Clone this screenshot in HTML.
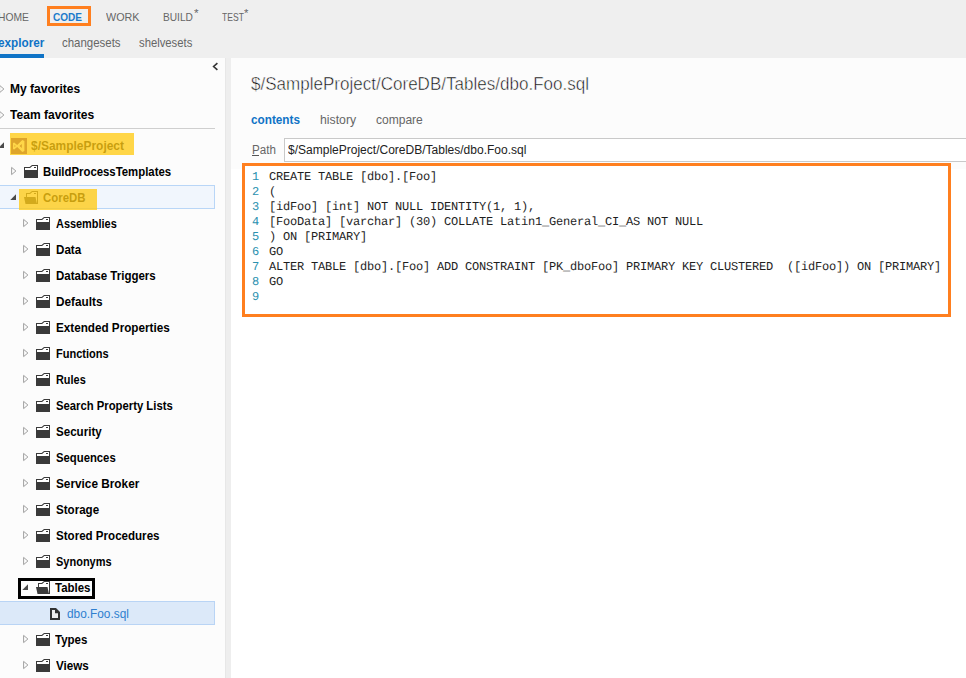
<!DOCTYPE html>
<html><head><meta charset="utf-8"><title>Code explorer</title>
<style>
html,body{margin:0;padding:0;overflow:hidden}
html{width:966px;height:678px}
body{width:966px;height:678px;overflow:hidden;background:#fff;position:relative;font-family:"Liberation Sans",sans-serif}
.b{position:absolute;box-sizing:content-box}
.i{position:absolute;display:block}
.t{position:absolute;white-space:pre;transform-origin:0 0}
.c{position:absolute;white-space:pre;font:12px/12px "Liberation Mono",monospace;letter-spacing:-0.2px;color:#1e1e1e;text-rendering:geometricPrecision}
.u{text-decoration:underline}
</style></head><body>
<div class="b" style="left:0;top:0;width:966px;height:58px;background:#efefef"></div>
<div class="b" style="left:47px;top:6px;width:38px;height:14px;border:3px solid #ff7f1f"></div>
<div class="b" style="left:0;top:54px;width:44px;height:4px;background:#0f73c6"></div>
<div class="b" style="left:0;top:58px;width:225px;height:620px;background:#fcfcfc"></div>
<div class="b" style="left:225px;top:58px;width:6px;height:620px;background:#eeeeee"></div>
<div class="b" style="left:231px;top:58px;width:735px;height:111px;background:#fcfcfc"></div>
<div class="b" style="left:225px;top:58px;width:1px;height:620px;background:#e7e7e7"></div>
<div class="b" style="left:252px;top:155px;width:7px;height:1px;background:#555"></div>
<svg class="i" style="left:211px;top:61px" width="9" height="11" viewBox="0 0 9 11"><path fill="none" stroke="#333" stroke-width="1.6" d="M6.4,2.1L2.6,5.5L6.4,8.9"/></svg>
<div class="b" style="left:0;top:128px;width:215px;height:1px;background:#cfcfcf"></div>
<div class="b" style="left:-1px;top:185px;width:214px;height:22px;background:#f1f6fd;border:1px solid #b9d6f7"></div>
<div class="b" style="left:-1px;top:601px;width:214px;height:22px;background:#dce9f9;border:1px solid #b9d4f5"></div>
<div class="b" style="left:284px;top:138px;width:681px;height:22px;background:#fff;border:1px solid #c9c9c9;border-right:0"></div>
<div class="b" style="left:242px;top:163px;width:703px;height:148px;background:#fff;border:3px solid #ff7f1f"></div>
<svg class="i" style="left:-0.8px;top:83.9px" width="7" height="10" viewBox="0 0 7 10"><path fill="none" stroke="#a0a0a0" stroke-width="1" d="M0.6,1.4 L4.9,5 L0.6,8.6 Z"/></svg>
<svg class="i" style="left:-0.8px;top:109.9px" width="7" height="10" viewBox="0 0 7 10"><path fill="none" stroke="#a0a0a0" stroke-width="1" d="M0.6,1.4 L4.9,5 L0.6,8.6 Z"/></svg>
<svg class="i" style="left:-2px;top:142px" width="6" height="6" viewBox="0 0 6 6"><path fill="#4a4a4a" d="M6,0.3V6H0.3Z"/></svg>
<svg class="i" style="left:11px;top:138px" width="16" height="16" viewBox="0 0 16 16"><rect width="16" height="16" fill="#68217a"/><path fill="#fff" fill-rule="evenodd" d="M11.3,2.1L13.4,3V13L11.3,13.9L6.2,8.9L3.2,11.5L2,10.9V5.1L3.2,4.5L6.2,7.1ZM10.8,6.1L8.5,8L10.8,9.9ZM3.5,6.9V9.1L4.8,8Z"/></svg>
<svg class="i" style="left:11px;top:166.4px" width="7" height="10" viewBox="0 0 7 10"><path fill="none" stroke="#a0a0a0" stroke-width="1" d="M0.6,1.4 L4.9,5 L0.6,8.6 Z"/></svg>
<svg class="i" style="left:24px;top:165px" width="14" height="13" viewBox="0 0 14 13" shape-rendering="crispEdges"><path fill="#3a3a3a" d="M0,2H5.6L8,0H14V13H0Z" shape-rendering="auto"/><path fill="#fff" d="M1,3H6.1L8.4,1H13V5H1Z" shape-rendering="auto"/><rect x="10" y="2" width="2" height="1" fill="#3a3a3a"/></svg>
<svg class="i" style="left:10px;top:194px" width="6" height="6" viewBox="0 0 6 6"><path fill="#4a4a4a" d="M6,0.3V6H0.3Z"/></svg>
<svg class="i" style="left:24px;top:191px" width="14" height="13" viewBox="0 0 14 13"><path fill="#3a3a3a" d="M2,2H5.6L8,0H14V13H2Z"/><path fill="#fff" d="M3,3H6.1L8.4,1H13V12H3Z"/><rect x="10" y="2" width="2" height="1" fill="#3a3a3a"/><path fill="#3a3a3a" d="M0,6H11.5L13,13H1.5Z"/></svg>
<svg class="i" style="left:23px;top:218.4px" width="7" height="10" viewBox="0 0 7 10"><path fill="none" stroke="#a0a0a0" stroke-width="1" d="M0.6,1.4 L4.9,5 L0.6,8.6 Z"/></svg>
<svg class="i" style="left:36px;top:217px" width="14" height="13" viewBox="0 0 14 13" shape-rendering="crispEdges"><path fill="#3a3a3a" d="M0,2H5.6L8,0H14V13H0Z" shape-rendering="auto"/><path fill="#fff" d="M1,3H6.1L8.4,1H13V5H1Z" shape-rendering="auto"/><rect x="10" y="2" width="2" height="1" fill="#3a3a3a"/></svg>
<svg class="i" style="left:23px;top:244.4px" width="7" height="10" viewBox="0 0 7 10"><path fill="none" stroke="#a0a0a0" stroke-width="1" d="M0.6,1.4 L4.9,5 L0.6,8.6 Z"/></svg>
<svg class="i" style="left:36px;top:243px" width="14" height="13" viewBox="0 0 14 13" shape-rendering="crispEdges"><path fill="#3a3a3a" d="M0,2H5.6L8,0H14V13H0Z" shape-rendering="auto"/><path fill="#fff" d="M1,3H6.1L8.4,1H13V5H1Z" shape-rendering="auto"/><rect x="10" y="2" width="2" height="1" fill="#3a3a3a"/></svg>
<svg class="i" style="left:23px;top:270.4px" width="7" height="10" viewBox="0 0 7 10"><path fill="none" stroke="#a0a0a0" stroke-width="1" d="M0.6,1.4 L4.9,5 L0.6,8.6 Z"/></svg>
<svg class="i" style="left:36px;top:269px" width="14" height="13" viewBox="0 0 14 13" shape-rendering="crispEdges"><path fill="#3a3a3a" d="M0,2H5.6L8,0H14V13H0Z" shape-rendering="auto"/><path fill="#fff" d="M1,3H6.1L8.4,1H13V5H1Z" shape-rendering="auto"/><rect x="10" y="2" width="2" height="1" fill="#3a3a3a"/></svg>
<svg class="i" style="left:23px;top:296.4px" width="7" height="10" viewBox="0 0 7 10"><path fill="none" stroke="#a0a0a0" stroke-width="1" d="M0.6,1.4 L4.9,5 L0.6,8.6 Z"/></svg>
<svg class="i" style="left:36px;top:295px" width="14" height="13" viewBox="0 0 14 13" shape-rendering="crispEdges"><path fill="#3a3a3a" d="M0,2H5.6L8,0H14V13H0Z" shape-rendering="auto"/><path fill="#fff" d="M1,3H6.1L8.4,1H13V5H1Z" shape-rendering="auto"/><rect x="10" y="2" width="2" height="1" fill="#3a3a3a"/></svg>
<svg class="i" style="left:23px;top:322.4px" width="7" height="10" viewBox="0 0 7 10"><path fill="none" stroke="#a0a0a0" stroke-width="1" d="M0.6,1.4 L4.9,5 L0.6,8.6 Z"/></svg>
<svg class="i" style="left:36px;top:321px" width="14" height="13" viewBox="0 0 14 13" shape-rendering="crispEdges"><path fill="#3a3a3a" d="M0,2H5.6L8,0H14V13H0Z" shape-rendering="auto"/><path fill="#fff" d="M1,3H6.1L8.4,1H13V5H1Z" shape-rendering="auto"/><rect x="10" y="2" width="2" height="1" fill="#3a3a3a"/></svg>
<svg class="i" style="left:23px;top:348.4px" width="7" height="10" viewBox="0 0 7 10"><path fill="none" stroke="#a0a0a0" stroke-width="1" d="M0.6,1.4 L4.9,5 L0.6,8.6 Z"/></svg>
<svg class="i" style="left:36px;top:347px" width="14" height="13" viewBox="0 0 14 13" shape-rendering="crispEdges"><path fill="#3a3a3a" d="M0,2H5.6L8,0H14V13H0Z" shape-rendering="auto"/><path fill="#fff" d="M1,3H6.1L8.4,1H13V5H1Z" shape-rendering="auto"/><rect x="10" y="2" width="2" height="1" fill="#3a3a3a"/></svg>
<svg class="i" style="left:23px;top:374.4px" width="7" height="10" viewBox="0 0 7 10"><path fill="none" stroke="#a0a0a0" stroke-width="1" d="M0.6,1.4 L4.9,5 L0.6,8.6 Z"/></svg>
<svg class="i" style="left:36px;top:373px" width="14" height="13" viewBox="0 0 14 13" shape-rendering="crispEdges"><path fill="#3a3a3a" d="M0,2H5.6L8,0H14V13H0Z" shape-rendering="auto"/><path fill="#fff" d="M1,3H6.1L8.4,1H13V5H1Z" shape-rendering="auto"/><rect x="10" y="2" width="2" height="1" fill="#3a3a3a"/></svg>
<svg class="i" style="left:23px;top:400.4px" width="7" height="10" viewBox="0 0 7 10"><path fill="none" stroke="#a0a0a0" stroke-width="1" d="M0.6,1.4 L4.9,5 L0.6,8.6 Z"/></svg>
<svg class="i" style="left:36px;top:399px" width="14" height="13" viewBox="0 0 14 13" shape-rendering="crispEdges"><path fill="#3a3a3a" d="M0,2H5.6L8,0H14V13H0Z" shape-rendering="auto"/><path fill="#fff" d="M1,3H6.1L8.4,1H13V5H1Z" shape-rendering="auto"/><rect x="10" y="2" width="2" height="1" fill="#3a3a3a"/></svg>
<svg class="i" style="left:23px;top:426.4px" width="7" height="10" viewBox="0 0 7 10"><path fill="none" stroke="#a0a0a0" stroke-width="1" d="M0.6,1.4 L4.9,5 L0.6,8.6 Z"/></svg>
<svg class="i" style="left:36px;top:425px" width="14" height="13" viewBox="0 0 14 13" shape-rendering="crispEdges"><path fill="#3a3a3a" d="M0,2H5.6L8,0H14V13H0Z" shape-rendering="auto"/><path fill="#fff" d="M1,3H6.1L8.4,1H13V5H1Z" shape-rendering="auto"/><rect x="10" y="2" width="2" height="1" fill="#3a3a3a"/></svg>
<svg class="i" style="left:23px;top:452.4px" width="7" height="10" viewBox="0 0 7 10"><path fill="none" stroke="#a0a0a0" stroke-width="1" d="M0.6,1.4 L4.9,5 L0.6,8.6 Z"/></svg>
<svg class="i" style="left:36px;top:451px" width="14" height="13" viewBox="0 0 14 13" shape-rendering="crispEdges"><path fill="#3a3a3a" d="M0,2H5.6L8,0H14V13H0Z" shape-rendering="auto"/><path fill="#fff" d="M1,3H6.1L8.4,1H13V5H1Z" shape-rendering="auto"/><rect x="10" y="2" width="2" height="1" fill="#3a3a3a"/></svg>
<svg class="i" style="left:23px;top:478.4px" width="7" height="10" viewBox="0 0 7 10"><path fill="none" stroke="#a0a0a0" stroke-width="1" d="M0.6,1.4 L4.9,5 L0.6,8.6 Z"/></svg>
<svg class="i" style="left:36px;top:477px" width="14" height="13" viewBox="0 0 14 13" shape-rendering="crispEdges"><path fill="#3a3a3a" d="M0,2H5.6L8,0H14V13H0Z" shape-rendering="auto"/><path fill="#fff" d="M1,3H6.1L8.4,1H13V5H1Z" shape-rendering="auto"/><rect x="10" y="2" width="2" height="1" fill="#3a3a3a"/></svg>
<svg class="i" style="left:23px;top:504.4px" width="7" height="10" viewBox="0 0 7 10"><path fill="none" stroke="#a0a0a0" stroke-width="1" d="M0.6,1.4 L4.9,5 L0.6,8.6 Z"/></svg>
<svg class="i" style="left:36px;top:503px" width="14" height="13" viewBox="0 0 14 13" shape-rendering="crispEdges"><path fill="#3a3a3a" d="M0,2H5.6L8,0H14V13H0Z" shape-rendering="auto"/><path fill="#fff" d="M1,3H6.1L8.4,1H13V5H1Z" shape-rendering="auto"/><rect x="10" y="2" width="2" height="1" fill="#3a3a3a"/></svg>
<svg class="i" style="left:23px;top:530.4px" width="7" height="10" viewBox="0 0 7 10"><path fill="none" stroke="#a0a0a0" stroke-width="1" d="M0.6,1.4 L4.9,5 L0.6,8.6 Z"/></svg>
<svg class="i" style="left:36px;top:529px" width="14" height="13" viewBox="0 0 14 13" shape-rendering="crispEdges"><path fill="#3a3a3a" d="M0,2H5.6L8,0H14V13H0Z" shape-rendering="auto"/><path fill="#fff" d="M1,3H6.1L8.4,1H13V5H1Z" shape-rendering="auto"/><rect x="10" y="2" width="2" height="1" fill="#3a3a3a"/></svg>
<svg class="i" style="left:23px;top:556.4px" width="7" height="10" viewBox="0 0 7 10"><path fill="none" stroke="#a0a0a0" stroke-width="1" d="M0.6,1.4 L4.9,5 L0.6,8.6 Z"/></svg>
<svg class="i" style="left:36px;top:555px" width="14" height="13" viewBox="0 0 14 13" shape-rendering="crispEdges"><path fill="#3a3a3a" d="M0,2H5.6L8,0H14V13H0Z" shape-rendering="auto"/><path fill="#fff" d="M1,3H6.1L8.4,1H13V5H1Z" shape-rendering="auto"/><rect x="10" y="2" width="2" height="1" fill="#3a3a3a"/></svg>
<svg class="i" style="left:22px;top:584px" width="6" height="6" viewBox="0 0 6 6"><path fill="#4a4a4a" d="M6,0.3V6H0.3Z"/></svg>
<svg class="i" style="left:36px;top:581px" width="14" height="13" viewBox="0 0 14 13"><path fill="#3a3a3a" d="M2,2H5.6L8,0H14V13H2Z"/><path fill="#fff" d="M3,3H6.1L8.4,1H13V12H3Z"/><rect x="10" y="2" width="2" height="1" fill="#3a3a3a"/><path fill="#3a3a3a" d="M0,6H11.5L13,13H1.5Z"/></svg>
<svg class="i" style="left:23px;top:634.4px" width="7" height="10" viewBox="0 0 7 10"><path fill="none" stroke="#a0a0a0" stroke-width="1" d="M0.6,1.4 L4.9,5 L0.6,8.6 Z"/></svg>
<svg class="i" style="left:36px;top:633px" width="14" height="13" viewBox="0 0 14 13" shape-rendering="crispEdges"><path fill="#3a3a3a" d="M0,2H5.6L8,0H14V13H0Z" shape-rendering="auto"/><path fill="#fff" d="M1,3H6.1L8.4,1H13V5H1Z" shape-rendering="auto"/><rect x="10" y="2" width="2" height="1" fill="#3a3a3a"/></svg>
<svg class="i" style="left:23px;top:660.4px" width="7" height="10" viewBox="0 0 7 10"><path fill="none" stroke="#a0a0a0" stroke-width="1" d="M0.6,1.4 L4.9,5 L0.6,8.6 Z"/></svg>
<svg class="i" style="left:36px;top:659px" width="14" height="13" viewBox="0 0 14 13" shape-rendering="crispEdges"><path fill="#3a3a3a" d="M0,2H5.6L8,0H14V13H0Z" shape-rendering="auto"/><path fill="#fff" d="M1,3H6.1L8.4,1H13V5H1Z" shape-rendering="auto"/><rect x="10" y="2" width="2" height="1" fill="#3a3a3a"/></svg>
<svg class="i" style="left:50px;top:608px" width="10" height="12" viewBox="0 0 10 12"><path fill="#333" d="M0,0H6L10,4V12H0Z"/><path fill="#eee" d="M2,2H5V5.2H8V10H2Z"/></svg>
<span class="c" style="left:252px;top:171px;color:#2b91af">1</span><span class="c" style="left:269px;top:171px">CREATE TABLE [dbo].[Foo]</span>
<span class="c" style="left:252px;top:186px;color:#2b91af">2</span><span class="c" style="left:269px;top:186px">(</span>
<span class="c" style="left:252px;top:201px;color:#2b91af">3</span><span class="c" style="left:269px;top:201px">[idFoo] [int] NOT NULL IDENTITY(1, 1),</span>
<span class="c" style="left:252px;top:216px;color:#2b91af">4</span><span class="c" style="left:269px;top:216px">[FooData] [varchar] (30) COLLATE Latin1_General_CI_AS NOT NULL</span>
<span class="c" style="left:252px;top:231px;color:#2b91af">5</span><span class="c" style="left:269px;top:231px">) ON [PRIMARY]</span>
<span class="c" style="left:252px;top:246px;color:#2b91af">6</span><span class="c" style="left:269px;top:246px">GO</span>
<span class="c" style="left:252px;top:261px;color:#2b91af">7</span><span class="c" style="left:269px;top:261px">ALTER TABLE [dbo].[Foo] ADD CONSTRAINT [PK_dboFoo] PRIMARY KEY CLUSTERED  ([idFoo]) ON [PRIMARY]</span>
<span class="c" style="left:252px;top:276px;color:#2b91af">8</span><span class="c" style="left:269px;top:276px">GO</span>
<span class="c" style="left:252px;top:291px;color:#2b91af">9</span><span class="c" style="left:269px;top:291px"></span>
<span class="t" id="t0" style="font:normal 11px/1 'Liberation Sans', sans-serif;color:#666;left:-2.20px;top:11.69px;transform:scaleX(0.9364);">HOME</span>
<span class="t" id="t1" style="font:bold 11px/1 'Liberation Sans', sans-serif;color:#1c7bcb;left:52.80px;top:11.69px;transform:scaleX(0.9125);">CODE</span>
<span class="t" id="t2" style="font:normal 11px/1 'Liberation Sans', sans-serif;color:#666;left:105.80px;top:11.69px;transform:scaleX(0.9785);">WORK</span>
<span class="t" id="t3" style="font:normal 11px/1 'Liberation Sans', sans-serif;color:#666;left:163.10px;top:11.69px;transform:scaleX(0.9227);">BUILD</span>
<span class="t" id="t4" style="font:normal 10px/1 'Liberation Sans', sans-serif;color:#666;left:193.70px;top:9.23px;transform:scaleX(1.1776);">*</span>
<span class="t" id="t5" style="font:normal 11px/1 'Liberation Sans', sans-serif;color:#666;left:221.80px;top:11.69px;transform:scaleX(0.7787);">TEST</span>
<span class="t" id="t6" style="font:normal 10px/1 'Liberation Sans', sans-serif;color:#666;left:244.20px;top:9.23px;transform:scaleX(1.1264);">*</span>
<span class="t" id="t7" style="font:bold 13px/1 'Liberation Sans', sans-serif;color:#0f73c6;left:-2.20px;top:36.00px;transform:scaleX(0.9023);">explorer</span>
<span class="t" id="t8" style="font:normal 13px/1 'Liberation Sans', sans-serif;color:#666;left:62.30px;top:36.00px;transform:scaleX(0.8812);">changesets</span>
<span class="t" id="t9" style="font:normal 13px/1 'Liberation Sans', sans-serif;color:#666;left:138.90px;top:36.00px;transform:scaleX(0.8678);">shelvesets</span>
<span class="t" id="t10" style="font:bold 12px/1 'Liberation Sans', sans-serif;color:#000;left:10.30px;top:82.84px;transform:scaleX(1.0024);">My favorites</span>
<span class="t" id="t11" style="font:bold 12px/1 'Liberation Sans', sans-serif;color:#000;left:10.30px;top:108.84px;transform:scaleX(1.0046);">Team favorites</span>
<span class="t" id="t12" style="font:bold 12px/1 'Liberation Sans', sans-serif;color:#000;left:31.10px;top:139.84px;transform:scaleX(0.9960);">$/SampleProject</span>
<span class="t" id="t13" style="font:bold 12px/1 'Liberation Sans', sans-serif;color:#000;left:43.10px;top:165.84px;transform:scaleX(0.9477);">BuildProcessTemplates</span>
<span class="t" id="t14" style="font:bold 12px/1 'Liberation Sans', sans-serif;color:#000;left:43.20px;top:191.84px;transform:scaleX(0.9514);">CoreDB</span>
<span class="t" id="t15" style="font:bold 12px/1 'Liberation Sans', sans-serif;color:#000;left:55.50px;top:217.84px;transform:scaleX(0.9100);">Assemblies</span>
<span class="t" id="t16" style="font:bold 12px/1 'Liberation Sans', sans-serif;color:#000;left:55.50px;top:243.84px;transform:scaleX(0.9686);">Data</span>
<span class="t" id="t17" style="font:bold 12px/1 'Liberation Sans', sans-serif;color:#000;left:55.50px;top:269.84px;transform:scaleX(0.9582);">Database Triggers</span>
<span class="t" id="t18" style="font:bold 12px/1 'Liberation Sans', sans-serif;color:#000;left:55.50px;top:295.84px;transform:scaleX(0.9822);">Defaults</span>
<span class="t" id="t19" style="font:bold 12px/1 'Liberation Sans', sans-serif;color:#000;left:55.50px;top:321.84px;transform:scaleX(0.9743);">Extended Properties</span>
<span class="t" id="t20" style="font:bold 12px/1 'Liberation Sans', sans-serif;color:#000;left:55.50px;top:347.84px;transform:scaleX(0.9193);">Functions</span>
<span class="t" id="t21" style="font:bold 12px/1 'Liberation Sans', sans-serif;color:#000;left:55.50px;top:373.84px;transform:scaleX(0.9086);">Rules</span>
<span class="t" id="t22" style="font:bold 12px/1 'Liberation Sans', sans-serif;color:#000;left:55.50px;top:399.84px;transform:scaleX(0.9407);">Search Property Lists</span>
<span class="t" id="t23" style="font:bold 12px/1 'Liberation Sans', sans-serif;color:#000;left:55.50px;top:425.84px;transform:scaleX(0.9650);">Security</span>
<span class="t" id="t24" style="font:bold 12px/1 'Liberation Sans', sans-serif;color:#000;left:55.50px;top:451.84px;transform:scaleX(0.9420);">Sequences</span>
<span class="t" id="t25" style="font:bold 12px/1 'Liberation Sans', sans-serif;color:#000;left:55.50px;top:477.84px;transform:scaleX(0.9831);">Service Broker</span>
<span class="t" id="t26" style="font:bold 12px/1 'Liberation Sans', sans-serif;color:#000;left:55.50px;top:503.84px;transform:scaleX(0.9645);">Storage</span>
<span class="t" id="t27" style="font:bold 12px/1 'Liberation Sans', sans-serif;color:#000;left:55.50px;top:529.84px;transform:scaleX(0.9639);">Stored Procedures</span>
<span class="t" id="t28" style="font:bold 12px/1 'Liberation Sans', sans-serif;color:#000;left:55.50px;top:555.84px;transform:scaleX(0.9162);">Synonyms</span>
<span class="t" id="t29" style="font:bold 12px/1 'Liberation Sans', sans-serif;color:#000;left:54.80px;top:581.84px;transform:scaleX(0.9535);">Tables</span>
<span class="t" id="t30" style="font:bold 12px/1 'Liberation Sans', sans-serif;color:#000;left:54.80px;top:633.84px;transform:scaleX(0.9587);">Types</span>
<span class="t" id="t31" style="font:bold 12px/1 'Liberation Sans', sans-serif;color:#000;left:55.50px;top:659.84px;transform:scaleX(0.9701);">Views</span>
<span class="t" id="t32" style="font:normal 12px/1 'Liberation Sans', sans-serif;color:#2f7fcf;left:67.20px;top:607.84px;transform:scaleX(0.9869);">dbo.Foo.sql</span>
<span class="t" id="t33" style="-webkit-text-stroke:0.5px #fcfcfc;font:normal 17.5px/1 'Liberation Sans', sans-serif;color:#0a0a0a;left:251.20px;top:76.39px;transform:scaleX(0.9733);">$/SampleProject/CoreDB/Tables/dbo.Foo.sql</span>
<span class="t" id="t34" style="font:bold 13px/1 'Liberation Sans', sans-serif;color:#0f73c6;left:251.20px;top:113.00px;transform:scaleX(0.9045);">contents</span>
<span class="t" id="t35" style="font:normal 13px/1 'Liberation Sans', sans-serif;color:#666;left:320.10px;top:113.00px;transform:scaleX(0.9426);">history</span>
<span class="t" id="t36" style="font:normal 13px/1 'Liberation Sans', sans-serif;color:#666;left:376.40px;top:113.00px;transform:scaleX(0.9253);">compare</span>
<span class="t" id="t37" style="font:normal 12px/1 'Liberation Sans', sans-serif;color:#666;left:252.00px;top:143.84px;transform:scaleX(0.9681);">Path</span>
<span class="t" id="t38" style="font:normal 12px/1 'Liberation Sans', sans-serif;color:#222;left:287.80px;top:143.84px;transform:scaleX(1.0012);">$/SampleProject/CoreDB/Tables/dbo.Foo.sql</span>
<div class="b" style="left:10px;top:133px;width:124px;height:22px;background:rgba(255,202,20,.78)"></div>
<div class="b" style="left:19px;top:189px;width:78px;height:21px;background:rgba(255,202,20,.78)"></div>
<div class="b" style="left:18px;top:578px;width:71px;height:15px;border:3px solid #000"></div>
</body></html>
